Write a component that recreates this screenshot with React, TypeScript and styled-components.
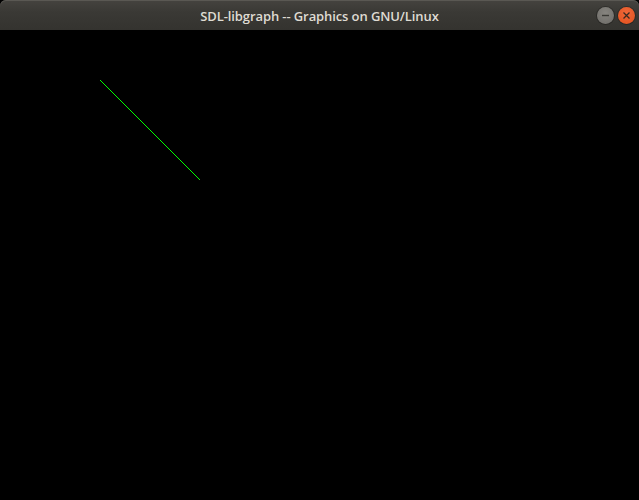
import styled, { createGlobalStyle } from "styled-components";

const GlobalStyle = createGlobalStyle`
  html, body {
    margin: 0;
    padding: 0;
    background: #000;
  }
  body {
    font-family: "Open Sans", "DejaVu Sans", sans-serif;
  }
`;

const Window = styled.div`
  width: 639px;
  height: 500px;
  display: flex;
  flex-direction: column;
  background: #000;
  overflow: hidden;
`;

const TitleBar = styled.div`
  height: 30px;
  flex: none;
  display: grid;
  grid-template-columns: 60px 1fr 60px;
  align-items: center;
  background: linear-gradient(#45433f, #3a3935 40%, #34332f);
  border-radius: 6px 6px 0 0;
  box-shadow: inset 0 1px 0 #5a5853;
`;

const Title = styled.div`
  grid-column: 2;
  text-align: center;
  color: #dfdbd2;
  font-size: 13px;
  font-weight: 600;
  letter-spacing: -0.1px;
  padding-top: 1px;
`;

const Buttons = styled.div`
  grid-column: 3;
  display: flex;
  justify-content: flex-end;
  align-items: center;
  gap: 4px;
  padding-right: 4px;
  padding-top: 1px;
`;

const CircleButton = styled.div<{ $kind: "min" | "close" }>`
  width: 17px;
  height: 17px;
  border-radius: 50%;
  display: flex;
  align-items: center;
  justify-content: center;
  background: ${(p) =>
    p.$kind === "close"
      ? "radial-gradient(circle at 50% 35%, #f0683a, #e2501c)"
      : "radial-gradient(circle at 50% 35%, #86847f, #6d6b67)"};
  box-shadow: 0 0 0 1px rgba(0, 0, 0, 0.25);
`;

const Canvas = styled.div`
  flex: 1;
  background: #000;
`;

const App = () => (
  <>
    <GlobalStyle />
    <Window>
      <TitleBar>
        <Title>SDL-libgraph -- Graphics on GNU/Linux</Title>
        <Buttons>
          <CircleButton $kind="min">
            <svg width="9" height="9" viewBox="0 0 9 9">
              <line x1="1" y1="4.5" x2="8" y2="4.5" stroke="#3a3935" strokeWidth="1.4" />
            </svg>
          </CircleButton>
          <CircleButton $kind="close">
            <svg width="9" height="9" viewBox="0 0 9 9">
              <path d="M1.5 1.5 L7.5 7.5 M7.5 1.5 L1.5 7.5" stroke="#3a2a20" strokeWidth="1.3" />
            </svg>
          </CircleButton>
        </Buttons>
      </TitleBar>
      <Canvas>
        <svg width="639" height="470" viewBox="0 0 639 470" shapeRendering="crispEdges">
          <line x1="100.5" y1="50.5" x2="200.5" y2="150.5" stroke="#00ff00" strokeWidth="1" />
        </svg>
      </Canvas>
    </Window>
  </>
);

export default App;
